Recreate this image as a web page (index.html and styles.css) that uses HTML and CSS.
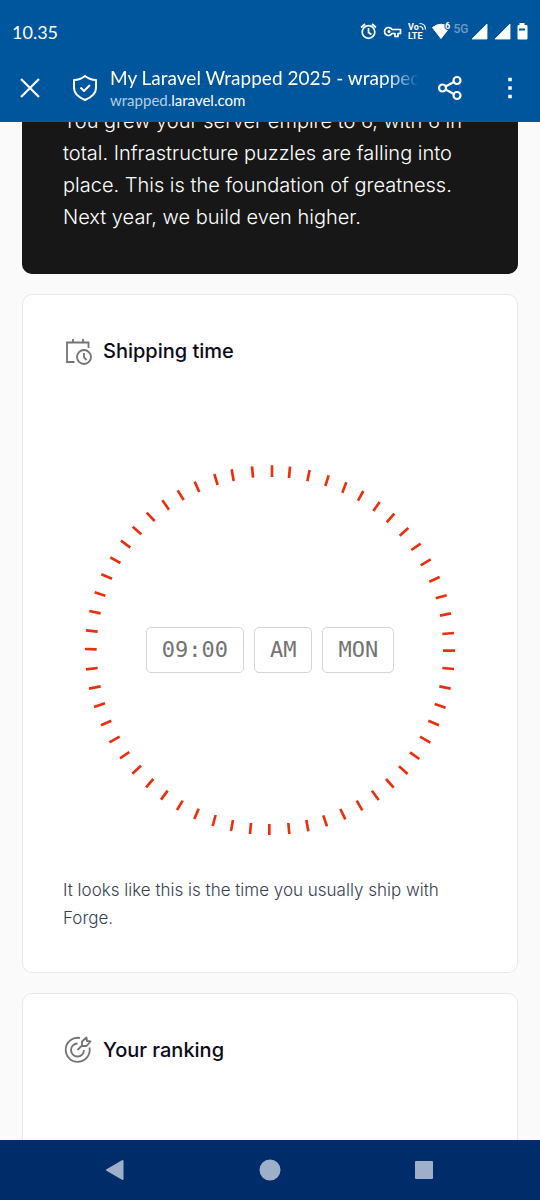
FILE: index.html
```html
<!DOCTYPE html>
<html lang="en">
<head>
<meta charset="utf-8">
<meta name="viewport" content="width=device-width, initial-scale=1">
<title>My Laravel Wrapped 2025</title>
<link rel="stylesheet" href="styles.css">
</head>
<body>
<div class="screen">
  <header class="top">
    <div class="status">
      <time class="clock">10.35</time>
      <svg class="status-icons" viewBox="0 0 170 24" role="img" aria-label="Alarm, VPN, VoLTE, Wi-Fi, signal, battery">
        <g fill="none" stroke="#fff" stroke-width="1.7">
          <circle cx="8.500" cy="12" r="6.300"/>
          <path d="M8.500 8v4.500l3 2M1 7.500l4-3.500M16 7.500l-4-3.500"/>
          <path d="M32 9.500a4 4 0 1 0 0 4h3v3h3v-3h2.500v-4z" stroke-linejoin="round"/>
        </g>
        <circle cx="29" cy="11.500" r="1.500" fill="#fff"/>
        <g fill="#fff" class="tiny"><text x="48" y="10">Vo</text><text x="48" y="19">LTE</text></g>
        <path d="M59.500 6.500q3.500 0 3.500 3.500M59.500 3.500q6 0 6 6" fill="none" stroke="#fff" stroke-width="1.200"/>
        <path d="M72.500 7.500Q81 1 89.500 7.500L81 18.500Z" fill="#fff" stroke="#fff" stroke-linejoin="round"/>
        <text class="six" x="85" y="9">6</text>
        <text class="five" x="93.500" y="12.500">5G</text>
        <path d="M127 4v15h-15zM150 4v15h-15z" fill="#fff" stroke="#fff" stroke-width=".8" stroke-linejoin="round"/>
        <path d="M159.500 3h5v2h2q1 0 1 1v12.500q0 1-1 1h-8q-1 0-1-1V6q0-1 1-1h1zM159 8.500v2h6v-2z" fill="#fff" fill-rule="evenodd"/>
      </svg>
    </div>
    <div class="toolbar">
      <button class="tool" aria-label="Close"><svg width="22" height="22" viewBox="0 0 22 22"><path d="M2 2l18 18M20 2L2 20" fill="none" stroke="#fff" stroke-width="2.200"/></svg></button>
      <button class="tool shield" aria-label="Site information"><svg width="26" height="28" viewBox="0 0 26 28" fill="none" stroke="#fff" stroke-width="2" stroke-linejoin="round"><path d="M13 2q5 4 11 4v8c0 6-5 9.500-11 12C7 23.500 2 20 2 14V6q6 0 11-4Z"/><path d="M8.500 13.500l3.500 3.500 6-6"/></svg></button>
      <div class="page-id">
        <div class="page-title">My Laravel Wrapped 2025 - wrapped</div>
        <div class="page-url"><span>wrapped.</span>laravel.com</div>
      </div>
      <button class="tool share" aria-label="Share"><svg width="26" height="26" viewBox="0 0 26 26" fill="none" stroke="#fff" stroke-width="2.200"><path d="M8.500 11.500l8.500-4.500M8.500 14.500l8.500 4.500"/><circle cx="5.500" cy="13" r="3.500"/><circle cx="20" cy="5.500" r="3.500"/><circle cx="20" cy="20.500" r="3.500"/></svg></button>
      <button class="tool more" aria-label="More options"><svg width="6" height="22" viewBox="0 0 6 22" fill="#fff"><path d="M1.200 .700h3.600v3.600h-3.600zM1.200 9.200h3.600v3.600h-3.600zM1.200 17.700h3.600v3.600h-3.600z"/></svg></button>
    </div>
  </header>

  <main class="feed-window">
    <div class="feed">
      <article class="card dark">
        <p>You grew your server empire to 6, with 6 in<br>total. Infrastructure puzzles are falling into<br>place. This is the foundation of greatness.<br>Next year, we build even higher.</p>
      </article>

      <article class="card">
        <h2 class="card-title">
          <svg width="30" height="30" viewBox="0 0 30 30" fill="none" stroke="#737373" stroke-width="1.800"><path d="M11.500 26H4V6.500h21.500V12M10 3v3.500M20 3v3.500"/><circle cx="21" cy="21" r="7"/><path d="M21 17v4.500l2.500 2.500"/></svg>
          Shipping time
        </h2>
        <div class="dial">
          <svg class="ticks" viewBox="45 45 1110 1110" aria-hidden="true">
            <path d="M606 46L606 81M660 50L657 84M719 60L712 94M776 76L766 108M829 97L817 128M880 123L864 152M929 156L910 183M973 191L950 217M1015 234L989 257M1052 281L1024 300M1082 328L1052 346M1109 381L1078 395M1130 436L1097 445M1143 490L1110 497M1152 549L1117 552M48 541L83 545M58 483L92 490M74 427L106 437M94 373L126 386M121 322L151 339M153 272L181 293M188 230L214 253M230 188L254 213M277 151L297 179M323 121L341 150M374 95L388 126M433 72L443 105M485 58L491 93M546 49L549 83"/>
            <path transform="translate(0 480)" d="M1155 122L1119 122M1152 177L1117 174M1142 236L1108 229M1127 293L1094 282M1107 346L1075 332M1081 398L1050 380M1048 447L1020 427M1013 492L987 469M971 533L948 507M926 570L906 542M877 601L860 572M826 628L811 597M771 649L760 616M715 664L709 630M658 672L655 639M598 676L598 642M540 672L543 639M483 663L489 630M428 648L437 615M373 627L386 596M321 600L338 572M273 569L293 542M228 532L250 507M187 491L213 467M150 445L178 426M118 397L149 380M93 346L124 332M72 291L105 280M57 236L92 229M48 178L83 174M45 117L80 118"/>
          </svg>
          <div class="readout"><span>09:00</span><span>AM</span><span>MON</span></div>
        </div>
        <p>It looks like this is the time you usually ship with<br>Forge.</p>
      </article>

      <article class="card">
        <h2 class="card-title">
          <svg width="30" height="30" viewBox="0 0 30 30" fill="none" stroke="#737373" stroke-width="1.800" stroke-linejoin="round"><path d="M17 3A12 12 0 1 0 26.500 12.500"/><path d="M14.500 8.500A6.500 6.500 0 1 0 21 15"/><path d="M14.500 15l5-5M19 10.500V6.500l4.500-4 .5 3.500 3.500.5-4 4.500h-4.500z"/></svg>
          Your ranking
        </h2>
      </article>
    </div>
  </main>

  <nav class="system-nav" aria-label="System navigation">
    <button aria-label="Back"><svg width="22" height="24" viewBox="0 0 22 24"><path d="M2 12L17.500 3v18z"/></svg></button>
    <button aria-label="Home"><svg width="22" height="24" viewBox="0 0 22 24"><circle cx="11" cy="12" r="9.500"/></svg></button>
    <button aria-label="Recent apps"><svg width="22" height="24" viewBox="0 0 22 24"><path d="M3 4h16v16H3z"/></svg></button>
  </nav>
</div>
</body>
</html>
```

FILE: styles.css
```css
* { box-sizing: border-box; }
body { margin: 0; font-family: Inter, "Liberation Sans", sans-serif; background: #fafafa; }
p, h2 { margin: 0; }
button { border: 0; padding: 0; background: none; display: grid; place-items: center; }
svg { display: block; flex: none; }

.screen { height: 100vh; display: flex; flex-direction: column; }

.top { background: #00569c; color: #fff; font-family: Lato, sans-serif; padding-bottom: 11px; }
.status { height: 64px; padding: 0 10px 0 12px; display: flex; align-items: center; justify-content: space-between; }
.clock { font-size: 18px; }
.status-icons { width: 170px; height: 24px; }
.tiny { font: 700 9px Roboto, sans-serif; }
.six { font: 700 9px Roboto, sans-serif; fill: #fff; stroke: #00569c; stroke-width: 2px; paint-order: stroke; }
.five { font: 500 12px Roboto, sans-serif; fill: #6d9cc6; }

.toolbar { display: flex; align-items: center; padding: 0 19px; height: 47px; }
.tool { flex: none; }
.shield { margin: 0 12px 0 31px; }
.page-id { flex: 1; min-width: 0; }
.page-title { font-size: 19px; line-height: 24px; overflow: hidden; white-space: nowrap; mask-image: linear-gradient(to left, transparent, #000 32px); }
.page-url { font-size: 15px; line-height: 20px; }
.page-url span { color: #b3cfe6; }
.share { margin: 0 0 0 18px; }
.more { margin: 0 8px 0 44px; }

.feed-window { flex: 1; min-height: 0; overflow: hidden; }
.feed { margin-top: -17px; padding: 0 22px; display: flex; flex-direction: column; gap: 20px; }
.card { background: #fff; border: 1px solid #e8e8e8; border-radius: 10px; padding: 40px; color: #364152; font-size: 17px; font-weight: 300; line-height: 28px; }
.card:last-child { padding-bottom: 120px; }
.dark { background: #171717; border-color: #171717; color: #fff; font-size: 20px; line-height: 32px; padding-top: 0; border-top: 0; border-radius: 0 0 10px 10px; }
.card-title { display: flex; align-items: center; gap: 10px; font-size: 20px; line-height: 32px; font-weight: 500; color: #0a0a1a; }

.dial { margin: 98px 22px 41px; display: grid; place-items: center; }
.ticks { width: 100%; grid-area: 1 / 1; fill: none; stroke: #ea2f10; stroke-width: 8; }
.readout { grid-area: 1 / 1; display: flex; gap: 10px; }
.readout span { border: 1px solid #d4d4d4; border-radius: 5px; padding: 6px 15px; font: 22px/32px "DejaVu Sans Mono", monospace; color: #737373; }

.system-nav { flex: none; height: 60px; background: #002d69; display: flex; align-items: center; justify-content: space-between; padding: 0 105px; }
.system-nav svg { fill: #9eafc9; stroke: #9eafc9; stroke-width: 2; stroke-linejoin: round; }
```
